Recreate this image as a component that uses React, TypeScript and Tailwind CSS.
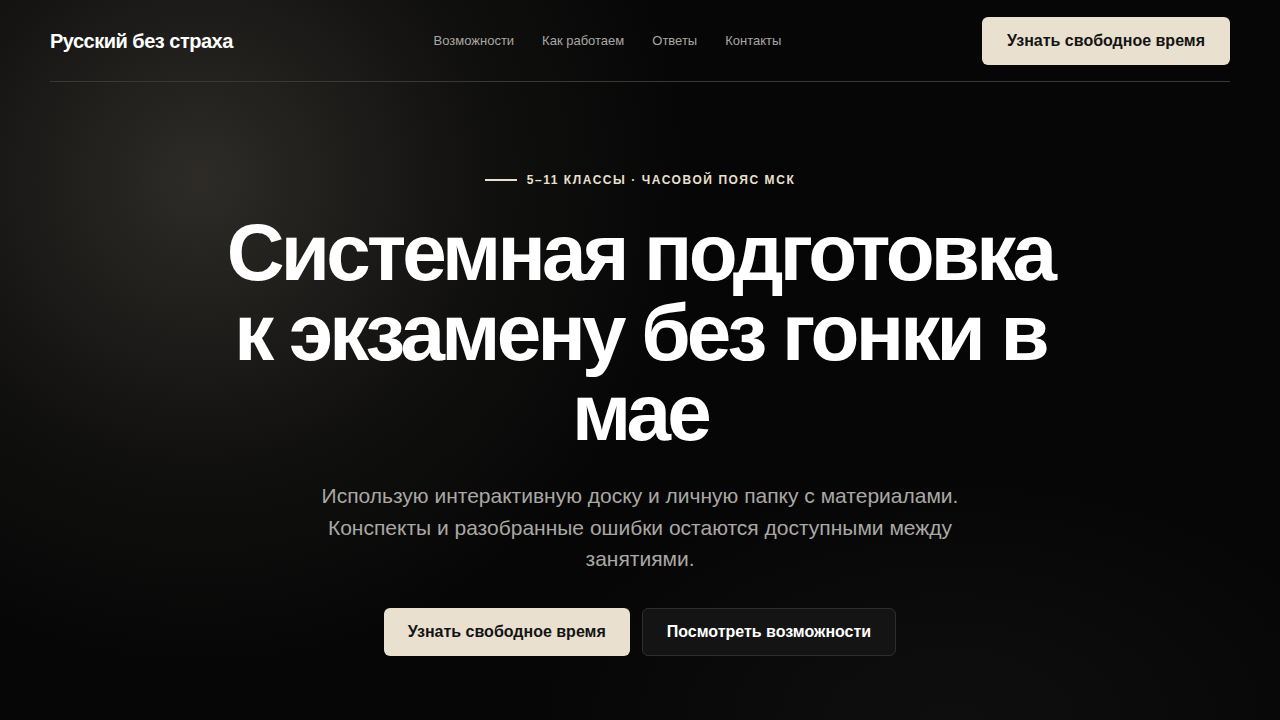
const links = ["Возможности", "Как работаем", "Ответы", "Контакты"];

export default function App() {
  return (
    <div className="relative min-h-screen overflow-hidden bg-[#060606] font-['Liberation_Sans',Arial,sans-serif] text-white">
      {/* soft glows */}
      <div className="pointer-events-none absolute -left-[300px] -top-[320px] h-[1000px] w-[1000px] rounded-full bg-[radial-gradient(circle,rgba(56,53,48,0.8)_0%,rgba(30,29,27,0.45)_40%,rgba(6,6,6,0)_70%)]" />
      <div className="pointer-events-none absolute -bottom-[260px] right-[-120px] h-[520px] w-[900px] rounded-full bg-[radial-gradient(ellipse,rgba(20,20,20,0.6)_0%,rgba(6,6,6,0)_70%)]" />

      <div className="relative mx-auto max-w-[1180px]">
        <header className="flex items-center justify-between border-b border-[#3a3835] pt-[17px] pb-4">
          <a className="text-xl font-bold tracking-tight text-white">Русский без страха</a>
          <nav className="flex items-center gap-7 text-[13px] text-[#a9a7a3]">
            {links.map((l) => (
              <a key={l}>{l}</a>
            ))}
          </nav>
          <button className="h-12 rounded-md bg-[#e9e0cf] px-[25px] text-base font-bold text-[#141414]">
            Узнать свободное время
          </button>
        </header>

        <section className="flex flex-col items-center pt-[90px] text-center">
          <div className="flex items-center gap-[10px] text-xs font-bold uppercase leading-4 tracking-[0.13em] text-[#e9e0cf]">
            <span className="h-[2px] w-8 bg-[#e9e0cf]" />
            <span>5–11 классы · часовой пояс МСК</span>
          </div>

          <h1 className="mt-[25px] max-w-[870px] text-[80px] font-bold leading-[80px] tracking-[-0.047em] text-white">
            Системная подготовка к экзамену без гонки в мае
          </h1>

          <p className="mt-[27px] max-w-[680px] text-[21px] leading-[31.5px] text-[#aaa8a4]">
            Использую интерактивную доску и личную папку с материалами. Конспекты и разобранные ошибки остаются доступными между занятиями.
          </p>

          <div className="mt-[33px] flex items-center gap-3">
            <button className="h-12 rounded-md bg-[#e9e0cf] px-6 text-base font-bold text-[#141414]">
              Узнать свободное время
            </button>
            <button className="h-12 rounded-md border border-[#2e2e2e] bg-[#141414] px-6 text-base font-bold text-white">
              Посмотреть возможности
            </button>
          </div>
        </section>
      </div>
    </div>
  );
}
